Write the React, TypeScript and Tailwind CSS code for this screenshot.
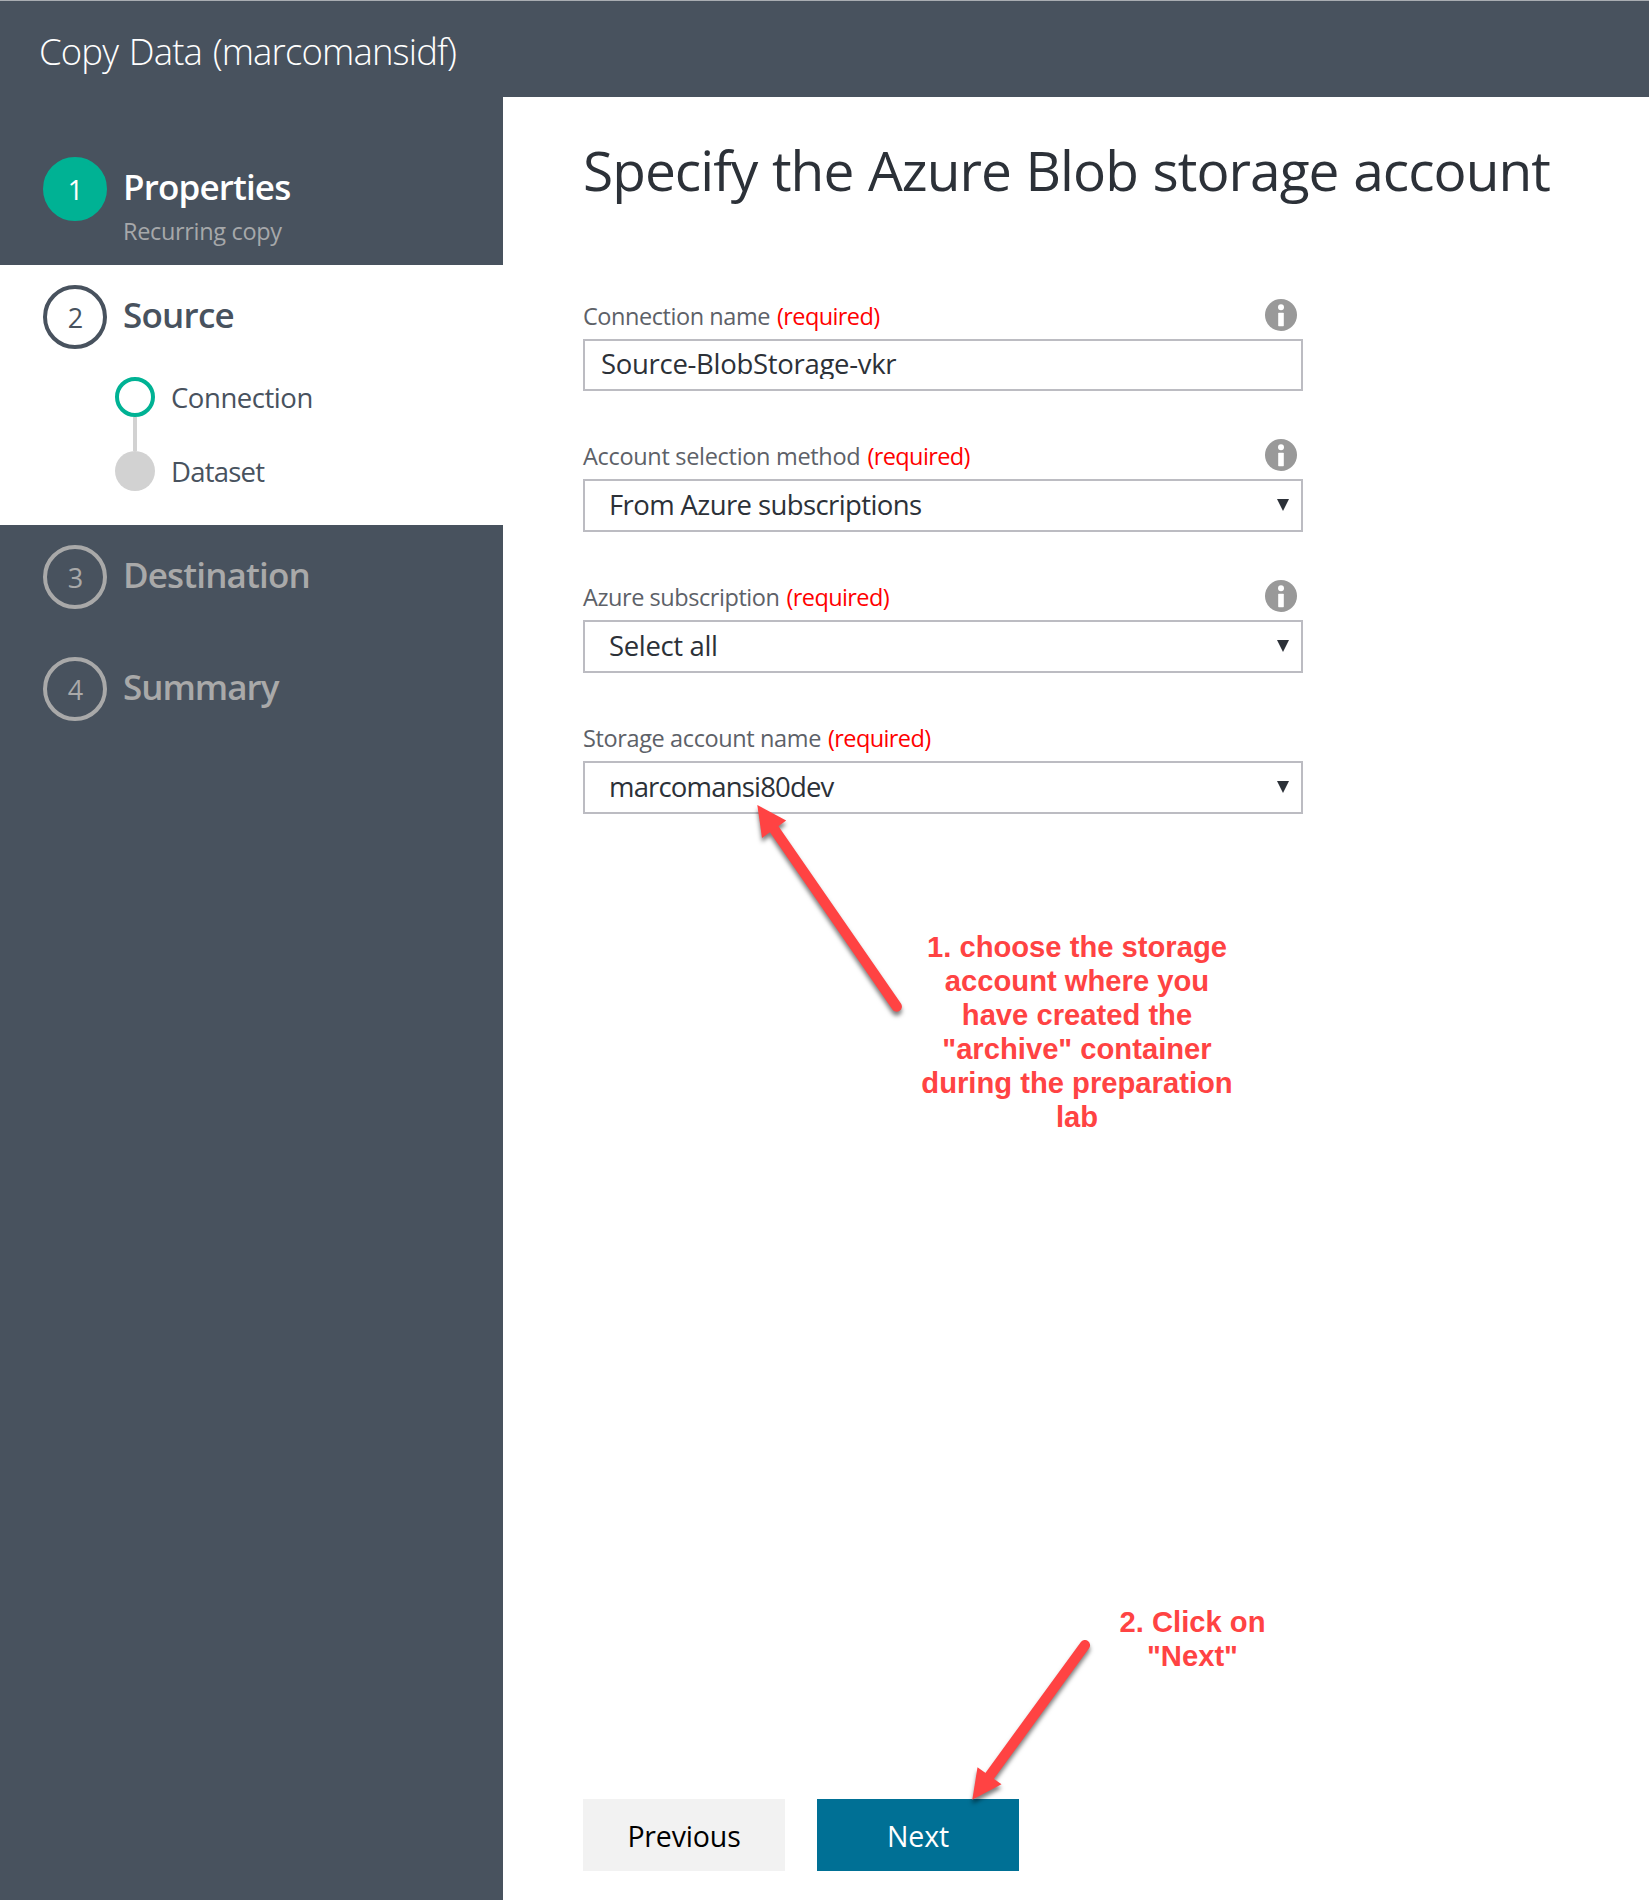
import type { ReactNode } from "react";

function StepBadge({ n, className }: { n: number; className: string }) {
  return (
    <div
      className={`flex size-16 shrink-0 items-center justify-center rounded-full border-4 pt-0.5 pl-px text-[27px] leading-8 ${className}`}
    >
      <span>{n}</span>
    </div>
  );
}

function StepRow({
  n,
  title,
  badge,
  text,
  children,
}: {
  n: number;
  title: string;
  badge: string;
  text: string;
  children?: ReactNode;
}) {
  return (
    <div className="flex h-16 gap-4">
      <StepBadge n={n} className={badge} />
      <div className="flex flex-col pt-2.5">
        <span className={`text-[35px] leading-10 font-semibold ${text}`}>{title}</span>
        {children}
      </div>
    </div>
  );
}

function Sidebar() {
  return (
    <nav className="flex w-[503px] shrink-0 flex-col bg-[#48525e] pt-10">
      <div className="h-32 pt-5 pl-[43px]">
        <StepRow
          n={1}
          title="Properties"
          badge="border-[#00b294] bg-[#00b294] text-white"
          text="text-white tracking-[-0.85px]"
        >
          <span className="mt-2 text-[23.5px] leading-8 tracking-[-0.33px] whitespace-nowrap text-[#a6a8aa]">
            Recurring copy
          </span>
        </StepRow>
      </div>
      <div className="h-[260px] bg-white pt-5 pl-[43px] text-[#48525e]">
        <StepRow n={2} title="Source" badge="border-[#48525e]" text="tracking-[-0.75px]" />
        <div className="mt-7 flex flex-col pl-[72px] text-[27.5px] leading-[38px]">
          <div className="flex h-10 items-center gap-4">
            <div className="size-10 rounded-full border-4 border-[#00b294]" />
            <span className="pt-0.5 tracking-[-0.45px]">Connection</span>
          </div>
          <div className="ml-[18px] h-[34px] w-1 bg-[#d2d2d2]" />
          <div className="flex h-10 items-center gap-4">
            <div className="size-10 rounded-full bg-[#d2d2d2]" />
            <span className="pt-0.5 tracking-[-0.78px]">Dataset</span>
          </div>
        </div>
      </div>
      <div className="h-28 pt-5 pl-[43px] text-[#a9a9a9]">
        <StepRow n={3} title="Destination" badge="border-[#a9a9a9]" text="tracking-[-0.85px]" />
      </div>
      <div className="h-28 pt-5 pl-[43px] text-[#a9a9a9]">
        <StepRow n={4} title="Summary" badge="border-[#a9a9a9]" text="tracking-[-1px]" />
      </div>
    </nav>
  );
}

function InfoIcon() {
  return (
    <svg viewBox="0 0 32 32" className="mr-1.5 size-8">
      <circle cx="16" cy="16" r="16" fill="#999" />
      <circle cx="16" cy="8.2" r="3" fill="#fff" />
      <rect x="13.2" y="13.7" width="5.6" height="13.5" rx="0.6" fill="#fff" />
    </svg>
  );
}

function Field({
  label,
  tracking,
  info = true,
  children,
}: {
  label: string;
  tracking: string;
  info?: boolean;
  children: ReactNode;
}) {
  return (
    <div className="flex flex-col gap-2">
      <div className="flex h-8 items-center justify-between">
        <div className="flex gap-[7px] pt-0.5 text-[23.5px] leading-[30px] text-[#5d6168]">
          <span className={tracking}>{label}</span>
          <span className="tracking-[-0.6px] text-[#ff0000]">(required)</span>
        </div>
        {info && <InfoIcon />}
      </div>
      {children}
    </div>
  );
}

function SelectBox({ value, tracking }: { value: string; tracking: string }) {
  return (
    <div className="flex h-[53px] items-start justify-between border-2 border-[#bcbcc2] pr-3 pl-6 text-[27.5px] text-[#2c3138]">
      <span className={`leading-[48px] ${tracking}`}>{value}</span>
      <svg viewBox="0 0 12 12" className="mt-[18px] size-3">
        <path d="M0 0H12L6 12Z" fill="#2c3138" />
      </svg>
    </div>
  );
}

const NOTE =
  "absolute text-center font-['Liberation_Sans',Arial,sans-serif] text-[29.2px] leading-[34px] font-bold text-[#ff4343]";

export default function App() {
  return (
    <div className="relative flex h-[1900px] w-[1649px] flex-col overflow-hidden bg-white font-['Open_Sans','Segoe_UI',sans-serif]">
      <header className="h-[97px] shrink-0 border-t border-[#a9adb2] bg-[#48525e] pt-[30px] pl-[39px]">
        <h1 className="text-[36.5px] leading-10 font-light tracking-[-0.85px] text-white [word-spacing:2px]">
          Copy Data (marcomansidf)
        </h1>
      </header>
      <div className="flex grow">
        <Sidebar />
        <main className="flex grow flex-col pt-[41px] pb-[29px] pl-20">
          <h2 className="text-[55px] leading-[64px] tracking-[-0.95px] whitespace-nowrap text-[#2c3138] [word-spacing:1.3px]">
            Specify the Azure Blob storage account
          </h2>
          <div className="mt-[97px] flex w-[720px] flex-col gap-12">
            <Field label="Connection name" tracking="tracking-[-0.44px]">
              <div className="h-[52px] border-2 border-[#bcbcc2] pt-2 pl-4 text-[#2c3138]">
                <div className="h-[30px] overflow-hidden text-[27.5px] leading-[30px] tracking-[-0.3px]">
                  Source-BlobStorage-vkr
                </div>
              </div>
            </Field>
            <Field label="Account selection method" tracking="tracking-[-0.31px]">
              <SelectBox value="From Azure subscriptions" tracking="tracking-[-0.6px]" />
            </Field>
            <Field label="Azure subscription" tracking="tracking-[-0.44px]">
              <SelectBox value="Select all" tracking="tracking-[-0.35px]" />
            </Field>
            <Field label="Storage account name" tracking="tracking-[-0.38px]" info={false}>
              <SelectBox value="marcomansi80dev" tracking="tracking-[-0.82px]" />
            </Field>
          </div>
          <div className="mt-auto flex gap-8 text-[28.5px] tracking-[-0.15px]">
            <button className="h-[72px] w-[202px] bg-[#f2f2f2] pt-[3px] text-black">Previous</button>
            <button className="h-[72px] w-[202px] bg-[#007095] pt-[3px] text-white">Next</button>
          </div>
        </main>
      </div>

      <svg
        viewBox="0 0 170 230"
        className="absolute top-[795px] left-[745px] h-[230px] w-[170px] overflow-visible [filter:drop-shadow(0px_4px_2px_rgba(0,0,0,0.5))]"
      >
        <path d="M29 34L151.7 211.5" stroke="#ff4343" strokeWidth="10.4" strokeLinecap="round" />
        <path d="M12.3 10L41.2 25.5L17 43Z" fill="#ff4343" />
      </svg>
      <p className={`${NOTE} top-[930px] left-[916px] w-[322px]`}>
        1. choose the storage
        <br />
        account where you
        <br />
        have created the
        <br />
        "archive" container
        <br />
        during the preparation
        <br />
        lab
      </p>

      <svg
        viewBox="0 0 160 190"
        className="absolute top-[1630px] left-[950px] h-[190px] w-[160px] overflow-visible [filter:drop-shadow(0px_4px_2px_rgba(0,0,0,0.5))]"
      >
        <path d="M38.5 147.5L134.9 15.2" stroke="#ff4343" strokeWidth="10.4" strokeLinecap="round" />
        <path d="M22.3 169.7L27.5 137.2L51.5 154.3Z" fill="#ff4343" />
      </svg>
      <p className={`${NOTE} top-[1605px] left-[1112px] w-[161px]`}>
        2. Click on
        <br />
        "Next"
      </p>
    </div>
  );
}
